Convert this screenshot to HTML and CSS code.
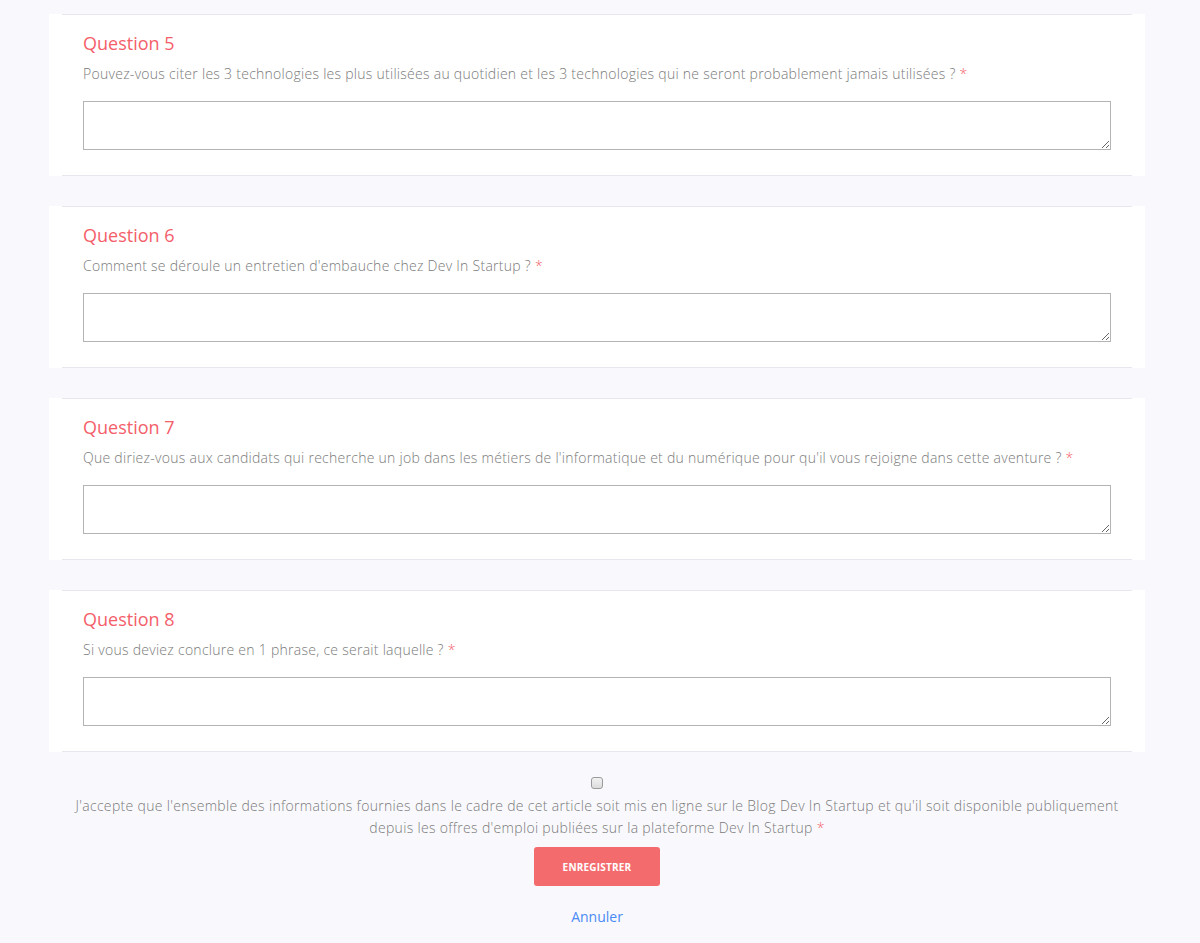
FILE: index.html
```html
<!DOCTYPE html>
<html lang="fr">
<head>
  <meta charset="UTF-8" />
  <meta name="viewport" content="width=device-width, initial-scale=1.0"/>
  <title>Questionnaire Dev In Startup</title>

  <link rel="stylesheet" href="styles.css">
</head>
<body>
  <form class="questionnaire">
    <section class="question-card">
      <div class="question-inner">
        <h3>Question 5</h3>
        <label for="q5">Pouvez-vous citer les 3 technologies les plus utilisées au quotidien et les 3 technologies qui ne seront probablement jamais utilisées ? <span class="required">*</span></label>
        <textarea id="q5"></textarea>
      </div>
    </section>

    <section class="question-card">
      <div class="question-inner">
        <h3>Question 6</h3>
        <label for="q6">Comment se déroule un entretien d'embauche chez Dev In Startup ? <span class="required">*</span></label>
        <textarea id="q6"></textarea>
      </div>
    </section>

    <section class="question-card">
      <div class="question-inner">
        <h3>Question 7</h3>
        <label for="q7">Que diriez-vous aux candidats qui recherche un job dans les métiers de l'informatique et du numérique pour qu'il vous rejoigne dans cette aventure ? <span class="required">*</span></label>
        <textarea id="q7"></textarea>
      </div>
    </section>

    <section class="question-card">
      <div class="question-inner">
        <h3>Question 8</h3>
        <label for="q8">Si vous deviez conclure en 1 phrase, ce serait laquelle ? <span class="required">*</span></label>
        <textarea id="q8"></textarea>
      </div>
    </section>

    <div class="consent">
      <input type="checkbox" id="consent" />
      <label for="consent">J'accepte que l'ensemble des informations fournies dans le cadre de cet article soit mis en ligne sur le Blog Dev In Startup et qu'il soit disponible publiquement<br>depuis les offres d'emploi publiées sur la plateforme Dev In Startup <span class="required">*</span></label>
      <button type="submit">Enregistrer</button>
      <a href="#" class="cancel">Annuler</a>
    </div>
  </form>
</body>
</html>
```

FILE: styles.css
```css
body {
  margin: 0;
  background: #f9f9fd;
  font-family: "Open Sans", Arial, sans-serif;
  color: #7a7a7a;
}

.questionnaire {
  width: 1096px;
  margin-left: 49px;
  padding-top: 14px;
}

.question-card {
  background: white;
  padding: 0 13px;
  margin-bottom: 30px;
}

.question-card:last-of-type {
  margin-bottom: 0;
}

.question-inner {
  border-top: 1px solid #e6e7ee;
  border-bottom: 1px solid #e6e7ee;
  padding: 15px 21px 25px;
}

.question-inner h3 {
  margin: 0;
  font-size: 18px;
  font-weight: 400;
  line-height: 26px;
  color: #f4606a;
}

.question-inner label {
  display: block;
  margin-top: 7px;
  font-size: 14px;
  line-height: 22px;
  font-weight: 300;
  letter-spacing: 0.27px;
}

.required {
  color: #f4606a;
}

.question-inner textarea {
  display: block;
  box-sizing: border-box;
  width: 100%;
  height: 49px;
  margin-top: 16px;
  border: 1px solid #b4b4b4;
  background: white;
}

.consent {
  display: flex;
  flex-direction: column;
  align-items: center;
  text-align: center;
}

.consent input {
  appearance: none;
  width: 12px;
  height: 12px;
  margin: 25px 0 6px;
  border: 1px solid #9a9a9a;
  border-radius: 3px;
  background: linear-gradient(#f2f2f2, #dcdcdc);
}

.consent label {
  font-size: 14px;
  line-height: 22px;
  font-weight: 300;
  letter-spacing: 0.32px;
}

.consent button {
  margin-top: 8px;
  width: 126px;
  height: 39px;
  border: none;
  border-radius: 3px;
  background: #f46b6d;
  color: white;
  font-family: "Open Sans", Arial, sans-serif;
  font-size: 10px;
  font-weight: 700;
  letter-spacing: 0.2px;
  text-transform: uppercase;
}

.cancel {
  margin-top: 20px;
  font-size: 14px;
  line-height: 22px;
  color: #4a8bf5;
  text-decoration: none;
}
```
